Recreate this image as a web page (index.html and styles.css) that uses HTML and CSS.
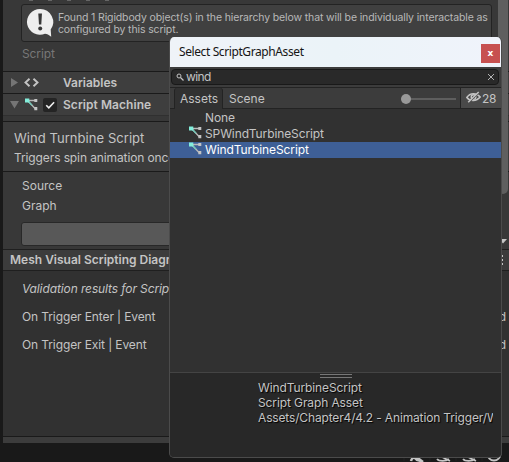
FILE: index.html
```html
<!DOCTYPE html>
<html lang="en">
<head>
<meta charset="utf-8">
<title>Inspector</title>
<link rel="stylesheet" href="styles.css">
</head>
<body>
<svg class="defs" aria-hidden="true">
  <symbol id="graph" viewBox="0 0 13 13">
    <path d="M3 2.500h7M3 3l7 7.500" stroke="#b9b9b9" stroke-width="1.300" fill="none"/>
    <path d="M3 3l4 4.300" stroke="#70c8b8" stroke-width="1.400"/>
    <path d="M0 .5h4.300v4H0z" fill="#83eedb"/>
    <path d="M9.300 1h3v3h-3zM9.300 9h3v3.300h-3z" fill="#c4c4c4"/>
  </symbol>
</svg>
<main class="inspector">
  <section class="info-section">
    <div class="marks"><i></i><i></i><i></i><i></i><i></i></div>
    <div class="info">
      <svg class="bubble" viewBox="0 0 26 28"><path d="M13 0a13 12.900 0 1 0 5 24.800c2 .1 3.700 1 6.200 3L23.700 20.600A13 13 0 0 0 13 0z" fill="#eee"/><path d="M11.300 4.500h3.700l-.7 11h-2.300z" fill="#383838"/><circle cx="13.200" cy="19.500" r="2" fill="#383838"/></svg>
      <p>Found 1 Rigidbody object(s) in the hierarchy below that will be individually interactable as<br>configured by this script.</p>
    </div>
    <div class="script-label">Script</div>
  </section>
  <header class="component">
    <svg class="fold" viewBox="0 0 9 9"><path d="M1 0v9l7-4.500z" fill="#757575"/></svg>
    <svg class="code" viewBox="0 0 15 9"><path d="M5.500.8L1.500 4.500l4 3.700M9.500.8l4 3.700-4 3.700" fill="none" stroke="#c4c4c4" stroke-width="1.900"/></svg>
    <b>Variables</b>
  </header>
  <header class="component">
    <svg class="fold" viewBox="0 0 9 9"><path d="M0 1h9L4.500 8.500z" fill="#757575"/></svg>
    <svg class="machine"><use href="#graph"/></svg>
    <span class="check"><svg viewBox="0 0 13 13"><path d="M3 6.700l2.400 2.500L10.300 4" fill="none" stroke="#eee" stroke-width="1.500"/></svg></span>
    <b class="machine-name">Script Machine</b>
  </header>
  <section class="summary">
    <div class="name">Wind Turnbine Script</div>
    <div class="description">Triggers spin animation once</div>
  </section>
  <section class="fields">
    <div>Source</div>
    <div>Graph</div>
    <div class="edit"></div>
    <svg class="drop" viewBox="0 0 8 5"><path d="M0 0h8L4 4.500z" fill="#c4c4c4"/></svg>
  </section>
  <header class="mesh"><b>Mesh Visual Scripting Diagnostics</b><span class="dots"><i></i><i></i><i></i></span></header>
  <section class="results">
    <div class="validation">Validation results for Script</div>
    <div class="event"><span>On Trigger Enter | Event</span><span>d</span></div>
    <div class="event"><span>On Trigger Exit | Event</span><span>d</span></div>
  </section>
  <div class="panel-foot"></div>
</main>
<div class="scrollbar"></div>
<footer class="status">
  <svg viewBox="0 0 100 18" fill="none" stroke="#c4c4c4" stroke-width="1.800">
    <path d="M0 0v18M26 0v18M52 0v18M78 0v18" stroke="#222" stroke-width="1"/>
    <path d="M7 18c1-4 4-4 6-1l4 1M11 13l8 6" stroke-width="2.500"/><path d="M33 16c2 2.500 9 2.500 12 0M34 12l12 6"/><path d="M59 16c2 2.500 9 2.500 12 0M60 12l12 6"/><circle cx="90" cy="11" r="6.500"/>
  </svg>
</footer>
<section class="picker">
  <header class="title"><span>Select ScriptGraphAsset</span><button class="close">x</button></header>
  <div class="search-row"><div class="search">
    <svg viewBox="0 0 8 8"><circle cx="3" cy="3" r="2" fill="none" stroke="#c4c4c4"/><path d="M4.500 4.500L7.500 7.500" stroke="#c4c4c4" stroke-width="1.200"/></svg>
    <span class="query">wind</span>
    <svg class="clear" viewBox="0 0 8 8"><path d="M1 1l6 6M7 1L1 7" stroke="#b4b4b4"/></svg>
  </div></div>
  <nav class="tabs">
    <span class="tab">Assets</span><span class="scene">Scene</span>
    <span class="slider"><i></i></span>
    <span class="hidden-count"><svg viewBox="0 0 15 12"><path d="M.8 6.500C4 1.500 10.500 1.500 14.200 6 10.500 10.500 4 10.500.8 6.500z" fill="none" stroke="#c4c4c4" stroke-width="1.500"/><circle cx="7.500" cy="6" r="2.300" fill="none" stroke="#c4c4c4" stroke-width="1.500"/><path d="M3 11.500L13 1.500" stroke="#494949" stroke-width="1.500"/><path d="M2.200 11.300L12.700 1" stroke="#c4c4c4" stroke-width="1.500"/></svg><span>28</span></span>
  </nav>
  <ul class="list">
    <li><i></i><span>None</span></li>
    <li><svg><use href="#graph"/></svg><span>SPWindTurbineScript</span></li>
    <li class="selected"><svg><use href="#graph"/></svg><span>WindTurbineScript</span></li>
  </ul>
  <div class="preview">
    <div class="handle"></div>
    <p>WindTurbineScript<br>Script Graph Asset<br><span class="path">Assets/Chapter4/4.2 - Animation Trigger/W</span></p>
  </div>
</section>
</body>
</html>
```

FILE: styles.css
```css
* { box-sizing: border-box; }
body {
  margin: 0; width: 509px; height: 462px; overflow: hidden; position: relative;
  background: #191919; color: #c4c4c4;
  font: 12px/16px Inter, "Liberation Sans", sans-serif; letter-spacing: -.11px; white-space: nowrap;
}
svg { display: block; flex: none; overflow: visible; }
p, ul { margin: 0; padding: 0; }
b { font-weight: 600; letter-spacing: 0; }
.defs { position: absolute; width: 0; height: 0; }
.inspector { margin-left: 3px; width: 506px; height: 443px; overflow: hidden; background: #383838; }
.info-section { height: 71px; padding: 0 0 0 18px; }
.marks { height: 4px; display: flex; gap: 15px; padding-left: 8px; }
.marks i { width: 4px; height: 1px; background: #666; }
.info {
  width: 471px; height: 38px; border: 1px solid #232323; border-radius: 3px;
  background: #404040; padding: 4px 0 0 5px; display: flex; color: #b8b8b8;
  font-size: 10.500px; line-height: 12px; letter-spacing: -.13px;
}
.bubble { width: 26px; height: 28px; }
.info p { margin: 3px 0 0 5px; }
.script-label { color: #777; margin: 4px 0 0 1px; }
.component { height: 22px; border-top: 1px solid #1a1a1a; background: #3e3e3e; display: flex; align-items: center; padding-left: 7px; }
.fold { width: 9px; height: 9px; }
.code { width: 15px; height: 9px; margin: 0 24px 0 5px; }
.machine { width: 13px; height: 13px; margin: 0 5px 0 6px; }
.machine-name { letter-spacing: .06px; }
.check { width: 14px; height: 14px; background: #242424; border-radius: 2px; margin-right: 6px; }
.check svg { width: 14px; height: 14px; }
.summary { height: 56px; padding: 13px 0 0 11px; border-top: 1px solid #303030; background: linear-gradient(#383838 5px, #1a1a1a 5px, #1a1a1a 6px, #3c3c3c 6px); }
.name { font-size: 13px; line-height: 18px; letter-spacing: .05px; }
.description { line-height: 20px; margin-top: 1px; }
.fields { height: 78px; border-top: 1px solid #1a1a1a; padding: 4px 0 0 19px; line-height: 20px; letter-spacing: 0; position: relative; }
.edit { margin: 6px 0 0 -1px; width: 465px; height: 24px; border: 1px solid #282828; border-radius: 3px; background: #585858; }
.drop { position: absolute; right: 2px; top: 67px; width: 8px; height: 5px; }
.mesh { height: 22px; background: #3c3c3c; border-top: 1px solid #1f1f1f; border-bottom: 1px solid #1f1f1f; display: flex; align-items: center; justify-content: space-between; padding: 0 6px 0 7px; }
.dots { display: grid; gap: 2px; }
.dots i { width: 2px; height: 2px; background: #c4c4c4; }
.results { height: 165px; background: #313131; padding: 10px 3px 0 19px; }
.validation { font-style: italic; margin-bottom: 6px; }
.event { height: 28px; line-height: 28px; display: flex; justify-content: space-between; }
.panel-foot { height: 7px; background: #3c3c3c; border-top: 1px solid #1a1a1a; }
.scrollbar { position: absolute; left: 498px; top: 0; width: 10px; height: 194px; background: #5f5f5f; border-radius: 0 0 5px 5px; }
.status { height: 19px; padding-left: 404px; }
.status svg { width: 100px; height: 18px; }
.picker { position: absolute; left: 169px; top: 37px; width: 333px; height: 421px; background: #313131; border: solid #4b4b4b; border-width: 0 1px 1px; border-radius: 5px; overflow: hidden; }
.title { height: 30px; background: linear-gradient(90deg, #eff3f8, #ebf3f8 50%, #f0f3fb); color: #151515; font: 12px/30px "Noto Sans", sans-serif; letter-spacing: -.4px; display: flex; justify-content: space-between; padding-left: 9px; }
.close { width: 19px; height: 19px; border: 0; margin: 7px 1px 0 0; padding: 0 0 2px; color: #fff; background: #c75050; font: bold 9px/16px "DejaVu Sans", sans-serif; }
.search-row { height: 20px; background: #3c3c3c; padding: 2px 2px 0 1px; }
.search { height: 16px; border: 1px solid #191919; border-radius: 4px; background: #292929; display: flex; align-items: center; padding: 0 3px 0 4px; }
.search svg { width: 8px; height: 8px; }
.query { margin-left: 2px; line-height: 14px; letter-spacing: -.6px; }
.search .clear { margin-left: auto; }
.tabs { height: 22px; background: #3c3c3c; border-top: 1px solid #232323; border-bottom: 1px solid #232323; display: flex; line-height: 21px; letter-spacing: 0; }
.tab { width: 49px; height: 21px; margin-left: 4px; padding-left: 5px; border: solid #232323; border-width: 0 1px; border-radius: 3px 3px 0 0; background: #313131; }
.scene { margin-left: 6px; width: 42px; }
.slider { width: 55px; height: 2px; margin: 10px 0 0 130px; background: #5e5e5e; }
.slider i { display: block; width: 10px; height: 10px; margin-top: -4px; border-radius: 50%; background: #999; }
.hidden-count { margin-left: auto; width: 41px; height: 20px; border-left: 1px solid #232323; background: #494949; display: flex; padding-left: 5px; letter-spacing: -.3px; }
.hidden-count svg { width: 15px; height: 12px; margin: 3px 1px 0 0; }
.list { list-style: none; height: 263px; padding-top: 1px; }
.list li { height: 16px; display: flex; padding-left: 19px; }
.list svg, .list i { width: 13px; height: 13px; margin: 1px 3px 0 0; flex: none; }
.list svg { margin-top: 0; margin-bottom: 1px; }
.selected { background: #3e5f96; color: #fff; }
.preview { height: 86px; background: #282828; border-top: 1px solid #444; overflow: hidden; }
.handle { width: 32px; height: 4px; margin: 1px auto 0; border: solid #777; border-width: 1px 0; }
.preview p { margin: 2px 8px 0 88px; line-height: 15px; text-shadow: 1px 1px 1px #000; overflow: hidden; }
.path { letter-spacing: -.15px; }
```
